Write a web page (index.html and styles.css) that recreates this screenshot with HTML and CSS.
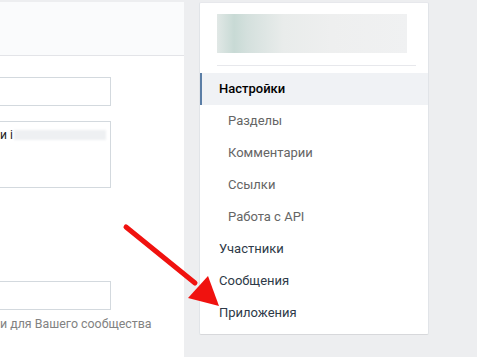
FILE: index.html
```html
<!DOCTYPE html>
<html lang="ru">
<head>
    <meta charset="UTF-8">
    <title>Управление сообществом</title>
    <link rel="stylesheet" href="styles.css">
</head>
<body>
<div class="page">
    <div class="main-box">
        <div class="main-head"></div>
        <div class="main-body">
            <div class="field"></div>
            <div class="area">
                <span class="area-text">и і</span>
                <span class="area-blur"></span>
            </div>
            <div class="field field-low"></div>
            <div class="hint">и для Вашего сообщества</div>
        </div>
    </div>
    <div class="side-box">
        <div class="side-head">
            <div class="side-blur"></div>
        </div>
        <ul class="side-menu">
            <li class="sel">Настройки</li>
            <li class="sub">Разделы</li>
            <li class="sub">Комментарии</li>
            <li class="sub">Ссылки</li>
            <li class="sub">Работа с API</li>
            <li>Участники</li>
            <li>Сообщения</li>
            <li>Приложения</li>
        </ul>
    </div>
    <svg class="arrow" width="110" height="95" viewBox="0 0 110 95">
        <line x1="11" y1="12" x2="80" y2="68" stroke="#f0120f" stroke-width="5" stroke-linecap="round"/>
        <polygon points="104,91 73,83 93,61" fill="#f0120f"/>
    </svg>
</div>
</body>
</html>
```
FILE: styles.css
```css
*{
    margin: 0;
    padding: 0;
}
li{
    list-style: none;
}
body{
    background: #edeef0;
    font-family: Roboto, "Open Sans", sans-serif;
    font-size: 13px;
}
.page{
    position: relative;
    display: flex;
    align-items: flex-start;
    gap: 15px;
    padding-top: 2px;
    height: 355px;
}
.main-box{
    width: 184px;
    height: 355px;
    background: #fff;
    overflow: hidden;
    flex-shrink: 0;
}
.main-head{
    height: 53px;
    background: #fafbfc;
    border-bottom: 1px solid #e3e4e8;
}
.main-body{
    padding-top: 21px;
}
.field{
    width: 110px;
    height: 27px;
    border: 1px solid #d3d9de;
    border-left: none;
}
.field-low{
    margin-top: 93px;
}
.area{
    position: relative;
    width: 110px;
    height: 65px;
    margin-top: 15px;
    border: 1px solid #d3d9de;
    border-left: none;
}
.area-text{
    position: absolute;
    left: 0;
    top: 6px;
    color: #222;
    font-size: 12px;
}
.area-blur{
    position: absolute;
    left: 14px;
    top: 8px;
    width: 92px;
    height: 10px;
    background: #eef0f2;
    filter: blur(1px);
}
.hint{
    margin-top: 6px;
    color: #828282;
    font-size: 12.4px;
    white-space: nowrap;
}
.side-box{
    width: 228px;
    background: #fff;
    border: 1px solid #e1e4e8;
    border-top-color: #e7e8ec;
    border-bottom-color: #d7d8db;
    border-radius: 2px;
    padding-bottom: 5px;
}
.side-head{
    margin: 11px 12px 0 17px;
    padding-bottom: 12px;
    border-bottom: 1px solid #e7e8ec;
}
.side-blur{
    width: 190px;
    height: 39px;
    background: linear-gradient(90deg, #e1e8e6 0%, #c8dad5 9%, #d4e0dd 16%, #e9eceb 35%, #eeefef 60%, #f0f1f2 100%);
}
.side-menu{
    margin-top: 7px;
}
.side-menu li{
    height: 32px;
    line-height: 32px;
    padding-left: 19px;
    color: #2e3a48;
}
.side-menu .sub{
    padding-left: 28px;
    color: #656565;
}
.side-menu .sel{
    background: #f0f2f5;
    border-left: 2px solid #5b7ea6;
    padding-left: 17px;
    color: #000;
    font-weight: 500;
}
.arrow{
    position: absolute;
    left: 115px;
    top: 215px;
}
```
